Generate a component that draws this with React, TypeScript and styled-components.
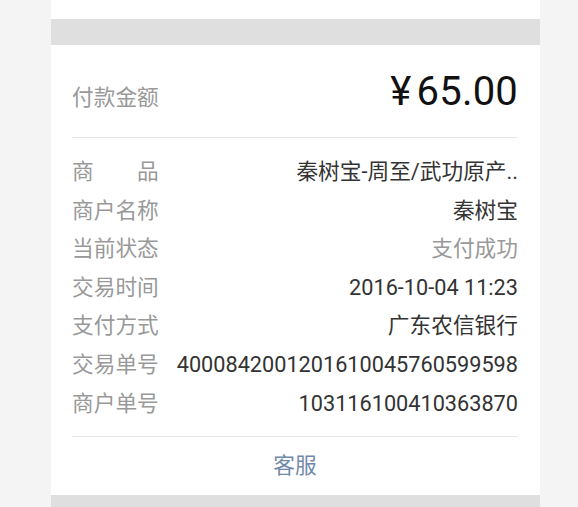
import React from "react";
import styled, { createGlobalStyle } from "styled-components";

const GlobalStyle = createGlobalStyle`
  html, body {
    margin: 0;
    padding: 0;
    background: #f4f4f4;
  }
  body {
    font-family: Roboto, "Noto Sans CJK SC", sans-serif;
  }
`;

const Column = styled.div`
  width: 489px;
  margin-left: 51px;
  height: 507px;
  overflow: hidden;
`;

const PrevCardTail = styled.div`
  height: 19px;
  background: #ffffff;
`;

const Spacer = styled.div<{ $h: number }>`
  height: ${(p) => p.$h}px;
  background: #dfdfdf;
`;

const Card = styled.section`
  background: #ffffff;
  padding: 0 22px 0 21px;
`;

const AmountRow = styled.div`
  height: 92px;
  box-sizing: border-box;
  padding-top: 27px;
  display: flex;
  justify-content: space-between;
  align-items: baseline;
`;

const AmountLabel = styled.span`
  font-size: 21.7px;
  color: #999999;
  line-height: 40px;
`;

const Amount = styled.span`
  font-size: 40px;
  line-height: 40px;
  color: #111111;
  letter-spacing: 0.2px;
`;

const Currency = styled.span`
  margin-right: 5px;
`;

const Divider = styled.div`
  height: 1px;
  background: #e6e6e6;
`;

const DetailList = styled.dl`
  margin: 0;
  padding: 15px 0 13px;
`;

const DetailRow = styled.div`
  display: flex;
  justify-content: space-between;
  font-size: 21.7px;
  line-height: 38.6px;
  white-space: nowrap;
`;

const Label = styled.dt`
  margin: 0;
  color: #999999;
`;

const Value = styled.dd<{ $muted?: boolean }>`
  margin: 0;
  color: ${(p) => (p.$muted ? "#999999" : "#333333")};
`;

const Footer = styled.div`
  height: 58px;
  display: flex;
  align-items: center;
  justify-content: center;
`;

const ServiceLink = styled.a`
  font-size: 21.7px;
  line-height: 1;
  color: #7189a8;
  text-decoration: none;
`;

const rows: { label: string; value: string; muted?: boolean }[] = [
  { label: "商\u3000\u3000品", value: "秦树宝-周至/武功原产.." },
  { label: "商户名称", value: "秦树宝" },
  { label: "当前状态", value: "支付成功", muted: true },
  { label: "交易时间", value: "2016-10-04 11:23" },
  { label: "支付方式", value: "广东农信银行" },
  { label: "交易单号", value: "4000842001201610045760599598" },
  { label: "商户单号", value: "103116100410363870" },
];

export default function App() {
  return (
    <>
      <GlobalStyle />
      <Column>
        <PrevCardTail />
        <Spacer $h={26} />
        <Card>
          <AmountRow>
            <AmountLabel>付款金额</AmountLabel>
            <Amount>
              <Currency>¥</Currency>65.00
            </Amount>
          </AmountRow>
          <Divider />
          <DetailList>
            {rows.map((r) => (
              <DetailRow key={r.label}>
                <Label>{r.label}</Label>
                <Value $muted={r.muted}>{r.value}</Value>
              </DetailRow>
            ))}
          </DetailList>
          <Divider />
          <Footer>
            <ServiceLink href="#">客服</ServiceLink>
          </Footer>
        </Card>
        <Spacer $h={20} />
      </Column>
    </>
  );
}
